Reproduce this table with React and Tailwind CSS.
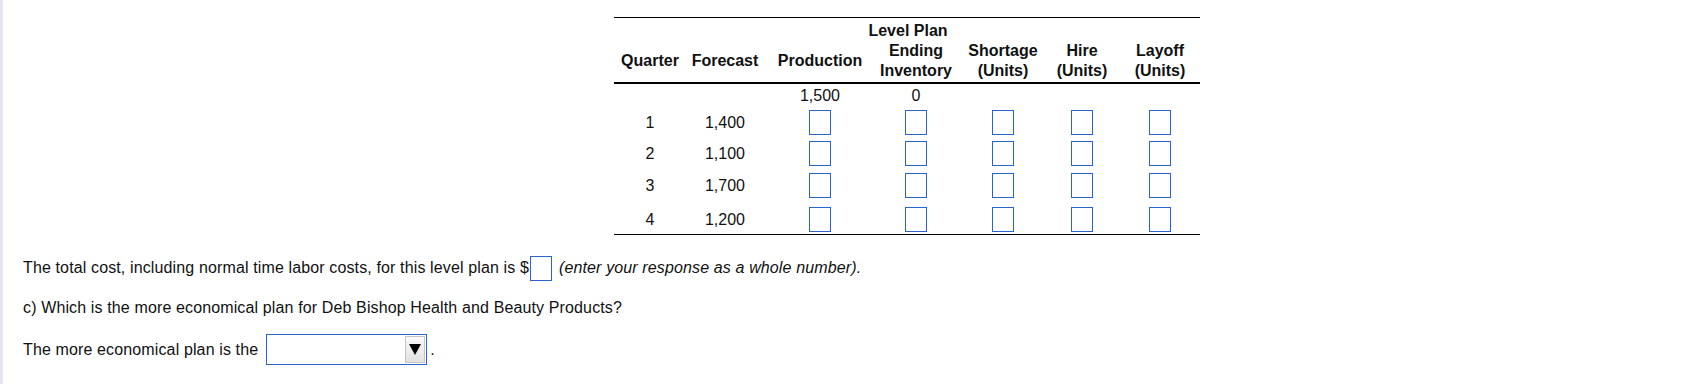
import React from 'react';

const cols = [
  { w: 'w-[72px]', pad: '' },
  { w: 'w-[78px]', pad: '' },
  { w: 'w-[112px]', pad: '' },
  { w: 'w-[80px]', pad: '' },
  { w: 'w-[94px]', pad: '' },
  { w: 'w-[64px]', pad: '' },
  { w: 'w-[86px]', pad: 'pl-[6px]' },
];

const rows = [
  { q: '1', f: '1,400', h: 'h-[31px]' },
  { q: '2', f: '1,100', h: 'h-[31px]' },
  { q: '3', f: '1,700', h: 'h-[33px]' },
  { q: '4', f: '1,200', h: 'h-[33px] pt-[3px] border-b border-black' },
];

const Box = () => (
  <span className="inline-block w-[22px] h-[25px] border border-[#2a62d0] bg-white" />
);

const Cell = ({ i, children, className = '' }) => (
  <div className={`${cols[i].w} ${cols[i].pad} flex flex-col items-center justify-center text-center ${className}`}>
    {children}
  </div>
);

const App = () => {
  return (
    <div className="min-h-[384px] bg-white border-l-[3px] border-[#e3e6eb] text-[16px] text-[#111] font-['Liberation_Sans',Arial,sans-serif]">
      {/* Level plan table */}
      <div className="pt-[17px] pl-[611px]">
        <div className="w-[586px] border-t border-black">
          {/* header */}
          <div className="flex h-[22px] font-bold">
            <Cell i={0} />
            <Cell i={1} />
            <Cell i={2} />
            <Cell i={3} className="pr-[16px] pt-[3px] whitespace-nowrap">Level Plan</Cell>
          </div>
          <div className="flex h-[44px] font-bold leading-[20px] border-b-2 border-black">
            <Cell i={0}>Quarter</Cell>
            <Cell i={1}>Forecast</Cell>
            <Cell i={2}>Production</Cell>
            <Cell i={3}><span>Ending</span><span>Inventory</span></Cell>
            <Cell i={4}><span>Shortage</span><span>(Units)</span></Cell>
            <Cell i={5}><span>Hire</span><span>(Units)</span></Cell>
            <Cell i={6}><span>Layoff</span><span>(Units)</span></Cell>
          </div>

          {/* starting row */}
          <div className="flex h-[23px]">
            <Cell i={0} />
            <Cell i={1} />
            <Cell i={2}>1,500</Cell>
            <Cell i={3}>0</Cell>
          </div>

          {rows.map((r) => (
            <div key={r.q} className={`flex ${r.h}`}>
              <Cell i={0}>{r.q}</Cell>
              <Cell i={1}>{r.f}</Cell>
              <Cell i={2}><Box /></Cell>
              <Cell i={3}><Box /></Cell>
              <Cell i={4}><Box /></Cell>
              <Cell i={5}><Box /></Cell>
              <Cell i={6}><Box /></Cell>
            </div>
          ))}
        </div>
      </div>

      {/* Questions */}
      <div className="pl-[20px] flex flex-col tracking-[0.13px]">
        <div className="mt-[20px] h-[26px] flex items-center">
          <span>The total cost, including normal time labor costs, for this level plan is $</span>
          <span className="ml-[1px] flex"><Box /></span>
          <span className="ml-[7px] italic">(enter your response as a whole number).</span>
        </div>

        <div className="mt-[17px] h-[20px] flex items-center">
          c) Which is the more economical plan for Deb Bishop Health and Beauty Products?
        </div>

        <div className="mt-[16px] h-[31px] flex items-center">
          <span>The more economical plan is the</span>
          <div className="ml-[8px] w-[161px] h-[31px] border border-[#2a62d0] bg-white flex items-center justify-end pr-[1px]">
            <div className="w-[20px] h-[27px] border border-[#c6c6c6] bg-gradient-to-b from-[#fafafa] to-[#e2e2e2] flex items-center justify-center">
              <svg width="12" height="11" viewBox="0 0 12 11">
                <polygon points="0,0 12,0 6,11" fill="#000" />
              </svg>
            </div>
          </div>
          <span className="ml-[3px]">.</span>
        </div>
      </div>
    </div>
  );
};

export default App;
